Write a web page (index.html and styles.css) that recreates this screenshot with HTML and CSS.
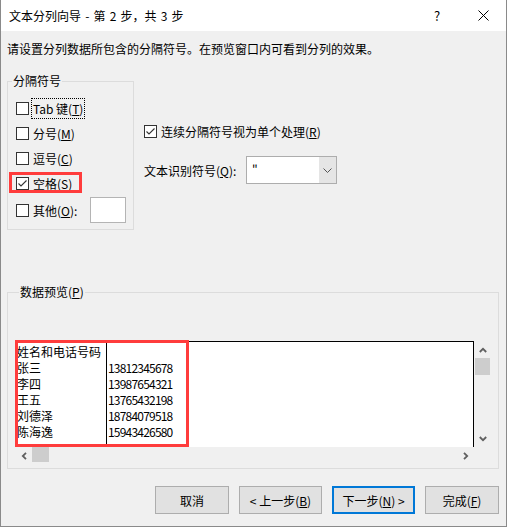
FILE: index.html
```html
<!DOCTYPE html>
<html lang="zh-CN">
<head>
<meta charset="utf-8">
<title>文本分列向导</title>
<link rel="stylesheet" href="styles.css">
</head>
<body>
<div class="window">
  <div class="titlebar">
    <div class="title">文本分列向导 - 第 2 步，共 3 步</div>
    <div class="tbtn help">?</div>
    <div class="tbtn close">
      <svg width="11" height="11" viewBox="0 0 11 11"><path d="M0.5 0.5 L10.5 10.5 M10.5 0.5 L0.5 10.5" stroke="#000" stroke-width="1" fill="none"/></svg>
    </div>
  </div>

  <div class="instr">请设置分列数据所包含的分隔符号。在预览窗口内可看到分列的效果。</div>

  <div class="top">
    <fieldset class="group1">
      <legend>分隔符号</legend>
      <div class="opt">
        <span class="cb"></span>
        <span class="lbl focus">Tab 键(<u>T</u>)</span>
      </div>
      <div class="opt">
        <span class="cb"></span>
        <span class="lbl">分号(<u>M</u>)</span>
      </div>
      <div class="opt">
        <span class="cb"></span>
        <span class="lbl">逗号(<u>C</u>)</span>
      </div>
      <div class="opt">
        <span class="cb checked"><svg width="11" height="11" viewBox="0 0 11 11"><polyline points="1.5,5.5 4,8 9.5,2.5" fill="none" stroke="#333" stroke-width="1.1"/></svg></span>
        <span class="lbl">空格(<u>S</u>)</span>
        <span class="mark mark-space"></span>
      </div>
      <div class="opt last">
        <span class="cb"></span>
        <span class="lbl">其他(<u>O</u>):</span>
        <span class="other-box"></span>
      </div>
    </fieldset>

    <div class="right">
      <div class="opt2">
        <span class="cb checked"><svg width="11" height="11" viewBox="0 0 11 11"><polyline points="1.5,5.5 4,8 9.5,2.5" fill="none" stroke="#333" stroke-width="1.1"/></svg></span>
        <span class="lbl">连续分隔符号视为单个处理(<u>R</u>)</span>
      </div>
      <div class="combo-row">
        <span class="combo-label">文本识别符号(<u>Q</u>):</span>
        <div class="combo">
          <span class="combo-text">"</span>
          <span class="combo-btn"><svg width="9" height="5" viewBox="0 0 9 5"><polyline points="0.5,0.5 4.5,4.5 8.5,0.5" fill="none" stroke="#555" stroke-width="1"/></svg></span>
        </div>
      </div>
    </div>
  </div>

  <fieldset class="group2">
    <legend>数据预览(<u>P</u>)</legend>
    <div class="preview">
      <div class="viewport">
        <div class="col col1">
          <div>姓名和电话号码</div>
          <div>张三</div>
          <div>李四</div>
          <div>王五</div>
          <div>刘德泽</div>
          <div>陈海逸</div>
        </div>
        <div class="col col2">
          <div>&nbsp;</div>
          <div>13812345678</div>
          <div>13987654321</div>
          <div>13765432198</div>
          <div>18784079518</div>
          <div>15943426580</div>
        </div>
        <span class="mark mark-preview"></span>
      </div>
      <div class="vscroll">
        <span class="arrow"><svg width="8" height="6" viewBox="0 0 8 6"><polyline points="0.8,5 4,1.8 7.2,5" fill="none" stroke="#606060" stroke-width="1.8"/></svg></span>
        <span class="vthumb"></span>
        <span class="vspace"></span>
        <span class="arrow"><svg width="8" height="6" viewBox="0 0 8 6"><polyline points="0.8,1 4,4.2 7.2,1" fill="none" stroke="#606060" stroke-width="1.8"/></svg></span>
      </div>
      <div class="hscroll">
        <span class="arrow"><svg width="6" height="8" viewBox="0 0 6 8"><polyline points="5,0.8 1.8,4 5,7.2" fill="none" stroke="#606060" stroke-width="1.8"/></svg></span>
        <span class="hthumb"></span>
        <span class="hspace"></span>
        <span class="arrow"><svg width="6" height="8" viewBox="0 0 6 8"><polyline points="1,0.8 4.2,4 1,7.2" fill="none" stroke="#606060" stroke-width="1.8"/></svg></span>
      </div>
      <div class="corner"></div>
    </div>
  </fieldset>

  <div class="buttons">
    <div class="btn w74">取消</div>
    <div class="btn w83">&lt; 上一步(<u>B</u>)</div>
    <div class="btn w83 default">下一步(<u>N</u>) &gt;</div>
    <div class="btn w74">完成(<u>F</u>)</div>
  </div>
</div>
</body>
</html>
```

FILE: styles.css
```css
html, body {
  margin: 0;
  padding: 0;
  background: #f0f0f0;
}

body {
  font-family: "Noto Sans CJK SC", "Microsoft YaHei", sans-serif;
  font-size: 12px;
  color: #000;
}

u {
  text-decoration: underline;
  text-underline-offset: 1px;
}

.window {
  width: 507px;
  height: 527px;
  box-sizing: border-box;
  border: 1px solid #8a8a8a;
  border-top: none;
  background: #f0f0f0;
  display: flex;
  flex-direction: column;
}

.titlebar {
  height: 31px;
  flex: none;
  background: #fff;
  display: flex;
  align-items: center;
}

.title {
  flex: 1;
  padding-left: 8px;
  line-height: 16px;
  word-spacing: 1.5px;
}

.tbtn {
  width: 46px;
  height: 31px;
  display: flex;
  align-items: center;
  justify-content: center;
}

.help {
  font-size: 13px;
}

.instr {
  margin: 10px 0 0 6px;
  line-height: 16px;
}

.top {
  display: flex;
  margin: 16px 0 0 6px;
}

fieldset {
  margin: 0;
  border: 1px solid #dcdcdc;
  min-width: 0;
}

legend {
  padding: 0 1px;
  margin-left: 4px;
  line-height: 16px;
}

.group1 {
  width: 127px;
  box-sizing: border-box;
  padding: 7px 0 5px 0;
}

.opt {
  height: 25px;
  display: flex;
  align-items: center;
  position: relative;
  padding-left: 8px;
}

.opt.last {
  height: 28px;
}

.cb {
  width: 13px;
  height: 13px;
  flex: none;
  box-sizing: border-box;
  border: 1px solid #333;
  background: #fff;
  display: flex;
  align-items: center;
  justify-content: center;
}

.cb svg {
  display: block;
}

.lbl {
  margin-left: 2px;
  border: 1px dotted transparent;
  padding: 0 1px;
  line-height: 19px;
  white-space: nowrap;
}

.lbl.focus {
  border-color: #000;
}

.other-box {
  margin-left: auto;
  margin-right: 7px;
  width: 36px;
  height: 26px;
  box-sizing: border-box;
  border: 1px solid #b4b4b4;
  background: #fff;
}

.mark {
  position: absolute;
  box-sizing: border-box;
  border: 3px solid #ff3c3c;
}

.mark-space {
  left: 1px;
  top: 1px;
  width: 73px;
  height: 21px;
}

.right {
  margin-left: 10px;
  padding-top: 46px;
}

.opt2 {
  height: 25px;
  display: flex;
  align-items: center;
}

.combo-row {
  margin-top: 12px;
  height: 28px;
  display: flex;
  align-items: center;
}

.combo-label {
  width: 102px;
  white-space: nowrap;
}

.combo {
  width: 91px;
  height: 28px;
  box-sizing: border-box;
  border: 1px solid #adadad;
  background: #fff;
  display: flex;
}

.combo-text {
  flex: 1;
  padding-left: 5px;
  line-height: 26px;
}

.combo-btn {
  width: 17px;
  background: #e5e5e5;
  display: flex;
  align-items: center;
  justify-content: center;
}

.group2 {
  margin: 54px 0 0 6px;
  width: 492px;
  box-sizing: border-box;
  padding: 41px 0 4px 7px;
}

.preview {
  display: grid;
  grid-template-columns: 459px 17px;
  grid-template-rows: 106px 17px;
}

.viewport {
  position: relative;
  box-sizing: border-box;
  border: 1px solid #000;
  border-bottom: none;
  background: #fff;
  display: flex;
  padding-top: 2px;
}

.col {
  line-height: 16px;
  white-space: nowrap;
}

.col1 {
  width: 91px;
  padding-left: 1px;
  box-sizing: border-box;
  border-right: 1px solid #000;
  margin-top: -2px;
  padding-top: 2px;
}

.col2 {
  padding-left: 1px;
  letter-spacing: -0.8px;
}

.mark-preview {
  left: -1px;
  top: -2px;
  width: 174px;
  height: 107px;
}

.vscroll {
  display: flex;
  flex-direction: column;
  align-items: center;
}

.vscroll .arrow {
  height: 17px;
  width: 17px;
  display: flex;
  align-items: center;
  justify-content: center;
}

.vthumb {
  width: 15px;
  height: 17px;
  background: #cdcdcd;
}

.vspace {
  flex: 1;
}

.hscroll {
  display: flex;
  align-items: flex-start;
}

.hscroll .arrow {
  width: 17px;
  height: 17px;
  display: flex;
  align-items: center;
  justify-content: center;
}

.hthumb {
  width: 17px;
  height: 15px;
  background: #cdcdcd;
}

.hspace {
  flex: 1;
}

.buttons {
  display: flex;
  gap: 10px;
  margin: 17px 0 0 154px;
}

.btn {
  height: 28px;
  box-sizing: border-box;
  border: 1px solid #adadad;
  background: #e1e1e1;
  display: flex;
  align-items: center;
  justify-content: center;
  white-space: nowrap;
}

.btn.default {
  border: 2px solid #0078d7;
}

.w74 {
  width: 74px;
}

.w83 {
  width: 83px;
}
```
